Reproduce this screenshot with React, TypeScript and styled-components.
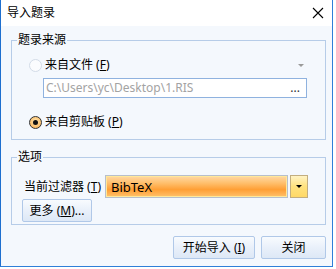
import styled, { createGlobalStyle } from 'styled-components';

const GlobalStyle = createGlobalStyle`
  html, body {
    margin: 0;
    padding: 0;
    background: #ffffff;
  }

  body {
    font-family: 'Noto Sans', 'Noto Sans CJK SC', sans-serif;
    font-size: 12px;
    color: #000000;
  }
`;

const App = () => {
  return (
    <>
      <GlobalStyle />
      <Window>
        <TitleBar>
          <Title>导入题录</Title>
          <CloseIcon width={12} height={12} viewBox='0 0 12 12'>
            <path d='M1 1 L11 11 M11 1 L1 11' stroke='#000' strokeWidth={1.1} />
          </CloseIcon>
        </TitleBar>
        <Body>
          <Group $height={107}>
            <Legend>题录来源</Legend>
            <SourceContent>
              <SourceRow>
                <RadioLabel>
                  <Radio $disabled />
                  <span>来自文件 (<u>F</u>)</span>
                </RadioLabel>
                <TinyArrow />
              </SourceRow>
              <PathBox>
                <PathText>C:\Users\yc\Desktop\1.RIS</PathText>
                <Dots>...</Dots>
              </PathBox>
              <SourceRow $gap={16}>
                <RadioLabel>
                  <Radio $checked />
                  <span>来自剪贴板 (<u>P</u>)</span>
                </RadioLabel>
              </SourceRow>
            </SourceContent>
          </Group>
          <Group $height={75}>
            <Legend>选项</Legend>
            <OptionContent>
              <FilterRow>
                <FilterLabel>当前过滤器 (<u>T</u>)</FilterLabel>
                <Combo>
                  <ComboText>BibTeX</ComboText>
                </Combo>
                <ComboButton>
                  <ArrowDown />
                </ComboButton>
              </FilterRow>
              <Button $width={70}>
                <span>更多 (<u>M</u>)...</span>
              </Button>
            </OptionContent>
          </Group>
          <Footer>
            <Button $width={82}>
              <span>开始导入 (<u>I</u>)</span>
            </Button>
            <Button $width={65}>关闭</Button>
          </Footer>
        </Body>
      </Window>
    </>
  );
};

const Window = styled.div`
  display: flex;
  flex-direction: column;
  box-sizing: border-box;
  width: 333px;
  height: 267px;
  border: 1px solid #2f7fd8;
  border-top: none;
  border-left-color: #1e6fcf;
  background: #ffffff;
`;

const TitleBar = styled.div`
  display: flex;
  align-items: center;
  justify-content: space-between;
  height: 26px;
  padding: 0 8px 0 6px;
  background: #ffffff;
`;

const Title = styled.span`
  font-size: 12px;
  line-height: 14px;
  color: #000000;
`;

const CloseIcon = styled.svg`
  display: block;
`;

const Body = styled.div`
  display: flex;
  flex: 1;
  flex-direction: column;
  padding: 7px 6px 0 10px;
  background: #f4f8fd;
`;

const Group = styled.fieldset<{ $height: number }>`
  box-sizing: border-box;
  height: ${({ $height }) => $height}px;
  margin: 0 0 10px;
  padding: 0;
  border: 1px solid #b6cce8;
  border-radius: 0;
  min-width: 0;
`;

const Legend = styled.legend`
  margin-left: 5px;
  padding: 0 1px;
  font-size: 12px;
  line-height: 14px;
  color: #000000;
`;

const SourceContent = styled.div`
  display: flex;
  flex-direction: column;
  padding: 10px 18px 0 17px;
`;

const SourceRow = styled.div<{ $gap?: number }>`
  display: flex;
  align-items: center;
  justify-content: space-between;
  height: 16px;
  margin-top: ${({ $gap }) => $gap ?? 0}px;
`;

const RadioLabel = styled.label`
  display: flex;
  align-items: center;
  gap: 3px;
  line-height: 16px;
`;

const Radio = styled.span<{ $checked?: boolean; $disabled?: boolean }>`
  position: relative;
  box-sizing: border-box;
  width: 13px;
  height: 13px;
  border-radius: 50%;
  border: 1px solid ${({ $disabled }) => ($disabled ? '#d3dce8' : '#333333')};
  background: ${({ $checked }) =>
    $checked ? 'radial-gradient(circle at 50% 40%, #ffe7b0, #f7a94a)' : '#fbfcfe'};

  &::after {
    content: '';
    display: ${({ $checked }) => ($checked ? 'block' : 'none')};
    position: absolute;
    top: 3px;
    left: 3px;
    width: 5px;
    height: 5px;
    border-radius: 50%;
    background: #111111;
  }
`;

const TinyArrow = styled.span`
  width: 0;
  height: 0;
  margin-right: 3px;
  border-left: 3px solid transparent;
  border-right: 3px solid transparent;
  border-top: 3px solid #9a9a9a;
`;

const PathBox = styled.div`
  display: flex;
  align-items: center;
  justify-content: space-between;
  box-sizing: border-box;
  height: 20px;
  margin: 5px 0 0 14px;
  padding: 0 6px 0 2px;
  border: 1px solid #8fb2df;
  background: #ffffff;
`;

const PathText = styled.span`
  font-size: 12px;
  line-height: 16px;
  color: #a3a3a3;
`;

const Dots = styled.span`
  font-size: 12px;
  line-height: 16px;
  color: #333333;
`;

const OptionContent = styled.div`
  display: flex;
  flex-direction: column;
  align-items: flex-start;
  gap: 1px;
  padding: 11px 17px 0 10px;
`;

const FilterRow = styled.div`
  display: flex;
  align-items: center;
  align-self: stretch;
  height: 23px;
`;

const FilterLabel = styled.span`
  width: 81px;
  margin-left: 2px;
  line-height: 16px;
`;

const Combo = styled.div`
  display: flex;
  align-items: center;
  flex: 1;
  box-sizing: border-box;
  height: 23px;
  border: 1px solid #b7bfcc;
  box-shadow: inset 0 0 0 1px #ffe89a;
  background: linear-gradient(#ffd9a6 0%, #ffbe6a 35%, #ff9f35 65%, #ffc26c 100%);
`;

const ComboText = styled.span`
  padding-left: 5px;
  font-size: 13px;
  line-height: 16px;
  color: #000000;
`;

const ComboButton = styled.div`
  display: flex;
  align-items: center;
  justify-content: center;
  box-sizing: border-box;
  width: 18px;
  height: 23px;
  margin-left: 2px;
  border: 1px solid #c2ae80;
  background: linear-gradient(#fff3c4, #ffe27e 50%, #ffd967);
`;

const ArrowDown = styled.span`
  width: 0;
  height: 0;
  border-left: 3px solid transparent;
  border-right: 3px solid transparent;
  border-top: 3px solid #000000;
`;

const Button = styled.div<{ $width: number }>`
  display: flex;
  align-items: center;
  justify-content: center;
  box-sizing: border-box;
  width: ${({ $width }) => $width}px;
  height: 23px;
  border: 1px solid #b0c8e8;
  border-radius: 2px;
  background: linear-gradient(#f8fbfe, #e9f0fa 50%, #dde8f6);
  font-size: 12px;
  line-height: 16px;
  color: #000000;
`;

const Footer = styled.div`
  display: flex;
  justify-content: flex-end;
  gap: 6px;
  margin-top: 1px;
`;

export default App;
